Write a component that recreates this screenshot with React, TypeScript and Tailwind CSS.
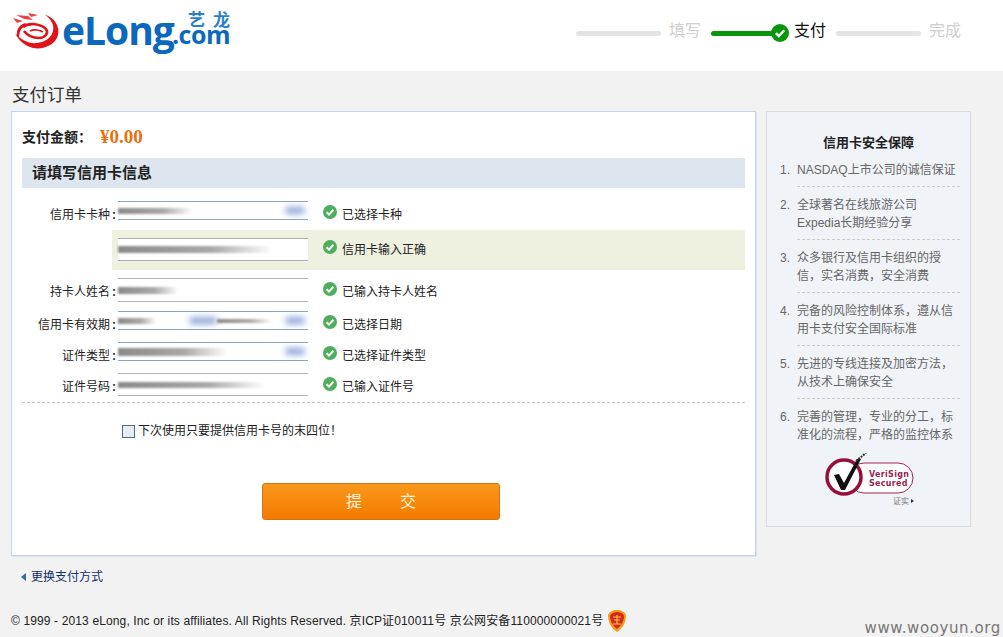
import React from 'react';

const sans = "font-['Liberation_Sans','Noto_Sans_CJK_SC',sans-serif]";

const Logo = () => (
  <div className="flex items-start">
    <svg width="47" height="38" viewBox="0 0 47 38" className="mt-[12px] shrink-0">
      <path d="M30 2C42 5 47 15 45 23C43 32 31 38 20 36C12 34 6 29 2 21C8 28 16 32 24 31C35 30 42 22 40 13C38 8 35 4 30 2Z" fill="#e0131a" />
      <path d="M10 15C16 10 28 12 33 17C36 21 32 26 26 26C20 26 14 23 11 19" fill="none" stroke="#e0131a" strokeWidth="2.6" />
      <path d="M4 24C3 17 7 12 13 11L12 14C8 16 6 20 6 26Z" fill="#e0131a" />
      <path d="M17 19C21 17 27 18 30 20" fill="none" stroke="#e0131a" strokeWidth="1.6" />
      <path d="M0 6L10 9L4 11ZM3 3L15 4L20 8L11 7ZM15 1L25 3L18 5Z" fill="#e4454a" />
    </svg>
    <span className="ml-[2px] mt-[7px] w-[112px] text-[39px] leading-[46px] font-bold tracking-[-1px] text-[#0b68bd] font-['Open_Sans',sans-serif]">eLong</span>
    <div className="mt-[11px] w-[56px] flex flex-col items-end">
      <span className="h-[15px] text-[17px] leading-[15px] font-bold text-[#2a7fc8] font-['Noto_Sans_CJK_SC',sans-serif] tracking-[8px] mr-[-8px]">艺龙</span>
      <span className="h-[16px] text-[25px] leading-[16px] font-bold tracking-[-0.5px] text-[#0b68bd] font-['Open_Sans',sans-serif]">.com</span>
    </div>
  </div>
);

const CheckDot = () => (
  <svg width="14" height="14" viewBox="0 0 14 14" className="shrink-0">
    <circle cx="7" cy="7" r="7" fill="#4fae5c" />
    <path d="M3.6 7.2L6 9.6L10.4 4.8" fill="none" stroke="#fff" strokeWidth="2" />
  </svg>
);

const Steps = () => (
  <div className={`self-start flex items-center mt-[19px] text-[16px] leading-[20px] ${sans}`}>
    <div className="w-[85px] h-[5px] mt-[5px] rounded-full bg-[#e4e4e4]" />
    <span className="ml-[8px] w-[32px] text-[#cfcfcf]">填写</span>
    <div className="ml-[10px] w-[64px] h-[5px] rounded-full bg-[#0a960a] mt-[5px]" />
    <svg width="18" height="18" viewBox="0 0 18 18" className="ml-[-4px] mt-[5px] shrink-0">
      <circle cx="9" cy="9" r="9" fill="#0a960a" />
      <path d="M4.8 9.2L7.8 12L13.2 6.2" fill="none" stroke="#fff" strokeWidth="2.4" />
    </svg>
    <span className="ml-[5px] w-[32px] text-[#111]">支付</span>
    <div className="ml-[10px] w-[85px] h-[5px] mt-[5px] rounded-full bg-[#e4e4e4]" />
    <span className="ml-[8px] w-[32px] text-[#cfcfcf]">完成</span>
  </div>
);

const Streak = ({ className }: { className: string }) => <div className={`blur-[1px] ${className}`} />;
const gray = 'bg-[linear-gradient(to_right,#8a8a8a,#a8a8a8_60%,transparent)]';
const Blue = ({ className = '' }: { className?: string }) => (
  <div className={`h-[7px] rounded-full bg-[#8fa5d8] blur-[3px] ${className}`} />
);

const Input = ({ className, children }: { className: string; children: React.ReactNode }) => (
  <div className={`w-[190px] flex items-center shrink-0 border-y bg-white ${className}`}>{children}</div>
);

const Row = ({ label, note, className, input }: { label: string; note: string; className: string; input: React.ReactNode }) => (
  <div className={`flex items-start ${className}`}>
    <div className="w-[96px] shrink-0 mt-[5.5px] flex justify-end text-[12px] leading-[16px] text-[#222]">
      <span>{label}</span>
      <span className="w-[8px] text-center font-bold">:</span>
    </div>
    {input}
    <div className="ml-[15px] mt-[4px]"><CheckDot /></div>
    <div className="ml-[5px] mt-[5.5px] text-[12px] leading-[16px] text-[#222]">{note}</div>
  </div>
);

const tips = [
  ['NASDAQ上市公司的诚信保证'],
  ['全球著名在线旅游公司', 'Expedia长期经验分享'],
  ['众多银行及信用卡组织的授', '信，实名消费，安全消费'],
  ['完备的风险控制体系，遵从信', '用卡支付安全国际标准'],
  ['先进的专线连接及加密方法，', '从技术上确保安全'],
  ['完善的管理，专业的分工，标', '准化的流程，严格的监控体系'],
];

const Verisign = () => (
  <svg width="92" height="56" viewBox="0 0 92 56" className="mt-[1px] ml-[45px]">
    <rect x="24" y="10" width="64" height="30" rx="15" fill="#fff" stroke="#a3234f" strokeWidth="1" />
    <circle cx="19" cy="24" r="17" fill="#fff" stroke="#96103c" strokeWidth="3.5" />
    <path d="M9 22L14 21L19 30L32 6L36 6L20 37L16 37Z" fill="#111" />
    <path d="M31 8L41 0" stroke="#333" strokeWidth="2" strokeDasharray="2 1" />
    <text x="44" y="24" fontSize="8" fontWeight="700" letterSpacing="0.3" fill="#96264f" fontFamily="DejaVu Sans">VeriSign</text>
    <text x="44" y="33" fontSize="8" fontWeight="700" letterSpacing="0.3" fill="#96264f" fontFamily="DejaVu Sans">Secured</text>
    <text x="68" y="51" fontSize="8" fill="#777" fontFamily="Noto Sans CJK SC">证实</text>
    <path d="M86 46L89 48L86 50Z" fill="#333" />
  </svg>
);

const Badge = () => (
  <svg width="18" height="22" viewBox="0 0 18 22">
    <path d="M9 0C13 0 17 2 18 5C18 12 15 18 9 22C3 18 0 12 0 5C1 2 5 0 9 0Z" fill="#f0a011" />
    <path d="M9 2C12 2 15 3 16 6C16 11 13 16 9 19C5 16 2 11 2 6C3 3 6 2 9 2Z" fill="#d8281c" />
    <path d="M5 7H13M9 5V14M6 10H12M5 14H13" stroke="#f5c542" strokeWidth="1.2" fill="none" />
  </svg>
);

export default function App() {
  return (
    <div className={`w-[1003px] h-[637px] overflow-hidden bg-[#f2f2f2] ${sans}`}>
      <header className="h-[71px] bg-white flex justify-between pl-[13px] pr-[42px]">
        <Logo />
        <Steps />
      </header>

      <main className="px-[11px]">
        <h1 className="h-[40px] pt-[13px] pl-[1px] text-[17.5px] leading-[22px] font-normal text-[#333]">支付订单</h1>

        <div className="flex items-start gap-[10px]">
          <section className="w-[745px] h-[445px] shrink-0 border border-[#c3d4ec] bg-white px-[10px] shadow-[1px_1px_1px_#dde3ea]">
            <div className="h-[46px] flex items-center pt-[5px]">
              <span className="text-[14px] font-bold text-[#222]">支付金额：</span>
              <span className="ml-[8px] text-[19px] font-bold text-[#e8700f] font-['Liberation_Serif',serif]">¥0.00</span>
            </div>
            <div className="h-[30px] flex items-center pl-[10px] bg-[#dde5ef] text-[15px] font-bold text-[#222]">请填写信用卡信息</div>

            <Row
              className="mt-[13px] h-[19px]"
              label="信用卡卡种"
              note="已选择卡种"
              input={
                <Input className="h-[19px] border-[#8fa6b5]">
                  <Streak className={`w-[75px] h-[6px] ${gray}`} />
                  <Blue className="ml-auto mr-[3px] w-[20px]" />
                </Input>
              }
            />

            <div className="mt-[10px] ml-[90px] h-[40px] pt-[8px] pl-[6px] flex items-start bg-[#eef0e0]">
              <Input className="h-[23px] border-[#aab0b0]">
                <Streak className={`w-[155px] h-[7px] ${gray}`} />
              </Input>
              <div className="ml-[15px] mt-[2px]"><CheckDot /></div>
              <div className="ml-[5px] mt-[4px] text-[12px] leading-[16px] text-[#222]">信用卡输入正确</div>
            </div>

            <Row
              className="mt-[8px] h-[24px]"
              label="持卡人姓名"
              note="已输入持卡人姓名"
              input={
                <Input className="h-[24px] border-[#b0b4b4]">
                  <Streak className={`w-[60px] h-[7px] ${gray}`} />
                </Input>
              }
            />
            <Row
              className="mt-[9px] h-[19px]"
              label="信用卡有效期"
              note="已选择日期"
              input={
                <Input className="h-[19px] border-[#8fa6b5]">
                  <Streak className={`w-[38px] h-[6px] ${gray}`} />
                  <Blue className="ml-[33px] w-[28px]" />
                  <Streak className={`w-[55px] h-[4px] ${gray}`} />
                  <Blue className="ml-auto mr-[3px] w-[20px]" />
                </Input>
              }
            />
            <Row
              className="mt-[12px] h-[19px]"
              label="证件类型"
              note="已选择证件类型"
              input={
                <Input className="h-[19px] border-[#8fa6b5]">
                  <Streak className={`w-[110px] h-[8px] ${gray}`} />
                  <Blue className="ml-auto mr-[3px] w-[20px]" />
                </Input>
              }
            />
            <Row
              className="mt-[12px] h-[23px]"
              label="证件号码"
              note="已输入证件号"
              input={
                <Input className="h-[23px] border-[#b0b4b4]">
                  <Streak className={`w-[148px] h-[6px] ${gray}`} />
                </Input>
              }
            />

            <div className="mt-[6px] border-t border-dashed border-[#c8c8c8]" />

            <div className="mt-[21px] ml-[100px] flex items-center text-[12px] leading-[14px] text-[#222]">
              <span className="w-[13px] h-[13px] border border-[#4a6a86] bg-[#e8edf3]" />
              <span className="ml-[3px]">下次使用只要提供信用卡号的末四位！</span>
            </div>

            <button className="mt-[45px] ml-[240px] w-[238px] h-[37px] flex items-center justify-center gap-[38px] rounded-[3px] border border-[#d0761a] bg-gradient-to-b from-[#f8981a] to-[#f57a00] text-[16px] text-[#fdf3d8]">
              <span>提</span>
              <span>交</span>
            </button>
          </section>

          <aside className="w-[205px] h-[416px] shrink-0 border border-[#d8dcdf] bg-[#f0f3f7] pt-[23px] pl-[13px]">
            <div className="h-[16px] pr-[13px] text-center text-[13px] leading-[16px] font-bold text-[#222]">信用卡安全保障</div>
            <ol className="mt-[10px] text-[12px] leading-[18px] text-[#666]">
              {tips.map((lines, i) => (
                <li key={i} className="flex">
                  <span className="w-[17px] shrink-0">{i + 1}.</span>
                  <div className={`w-[163px] whitespace-nowrap ${i < tips.length - 1 ? 'pb-[7px] border-b border-dashed border-[#cccccc] mb-[9px]' : 'pb-[8px]'}`}>
                    {lines.map(line => <div key={line}>{line}</div>)}
                  </div>
                </li>
              ))}
            </ol>
            <Verisign />
          </aside>
        </div>

        <a className="mt-[13px] ml-[10px] h-[16px] flex items-center text-[12px] text-[#0f2f6a]">
          <span className="w-0 h-0 border-y-[4px] border-y-transparent border-r-[5px] border-r-[#2f6ab0]" />
          <span className="ml-[5px]">更换支付方式</span>
        </a>
      </main>

      <footer className="mt-[21px] pl-[11px] pr-[2px] flex items-center text-[12px] text-[#222]">
        <span className="whitespace-nowrap tracking-[0.13px]">© 1999 - 2013 eLong, Inc or its affiliates. All Rights Reserved. 京ICP证010011号 京公网安备110000000021号</span>
        <span className="ml-[5px]"><Badge /></span>
        <span className="ml-auto mt-[14px] text-[15px] leading-[16px] text-[#777] tracking-[0.6px] font-['DejaVu_Sans',sans-serif]">www.wooyun.org</span>
      </footer>
    </div>
  );
}
